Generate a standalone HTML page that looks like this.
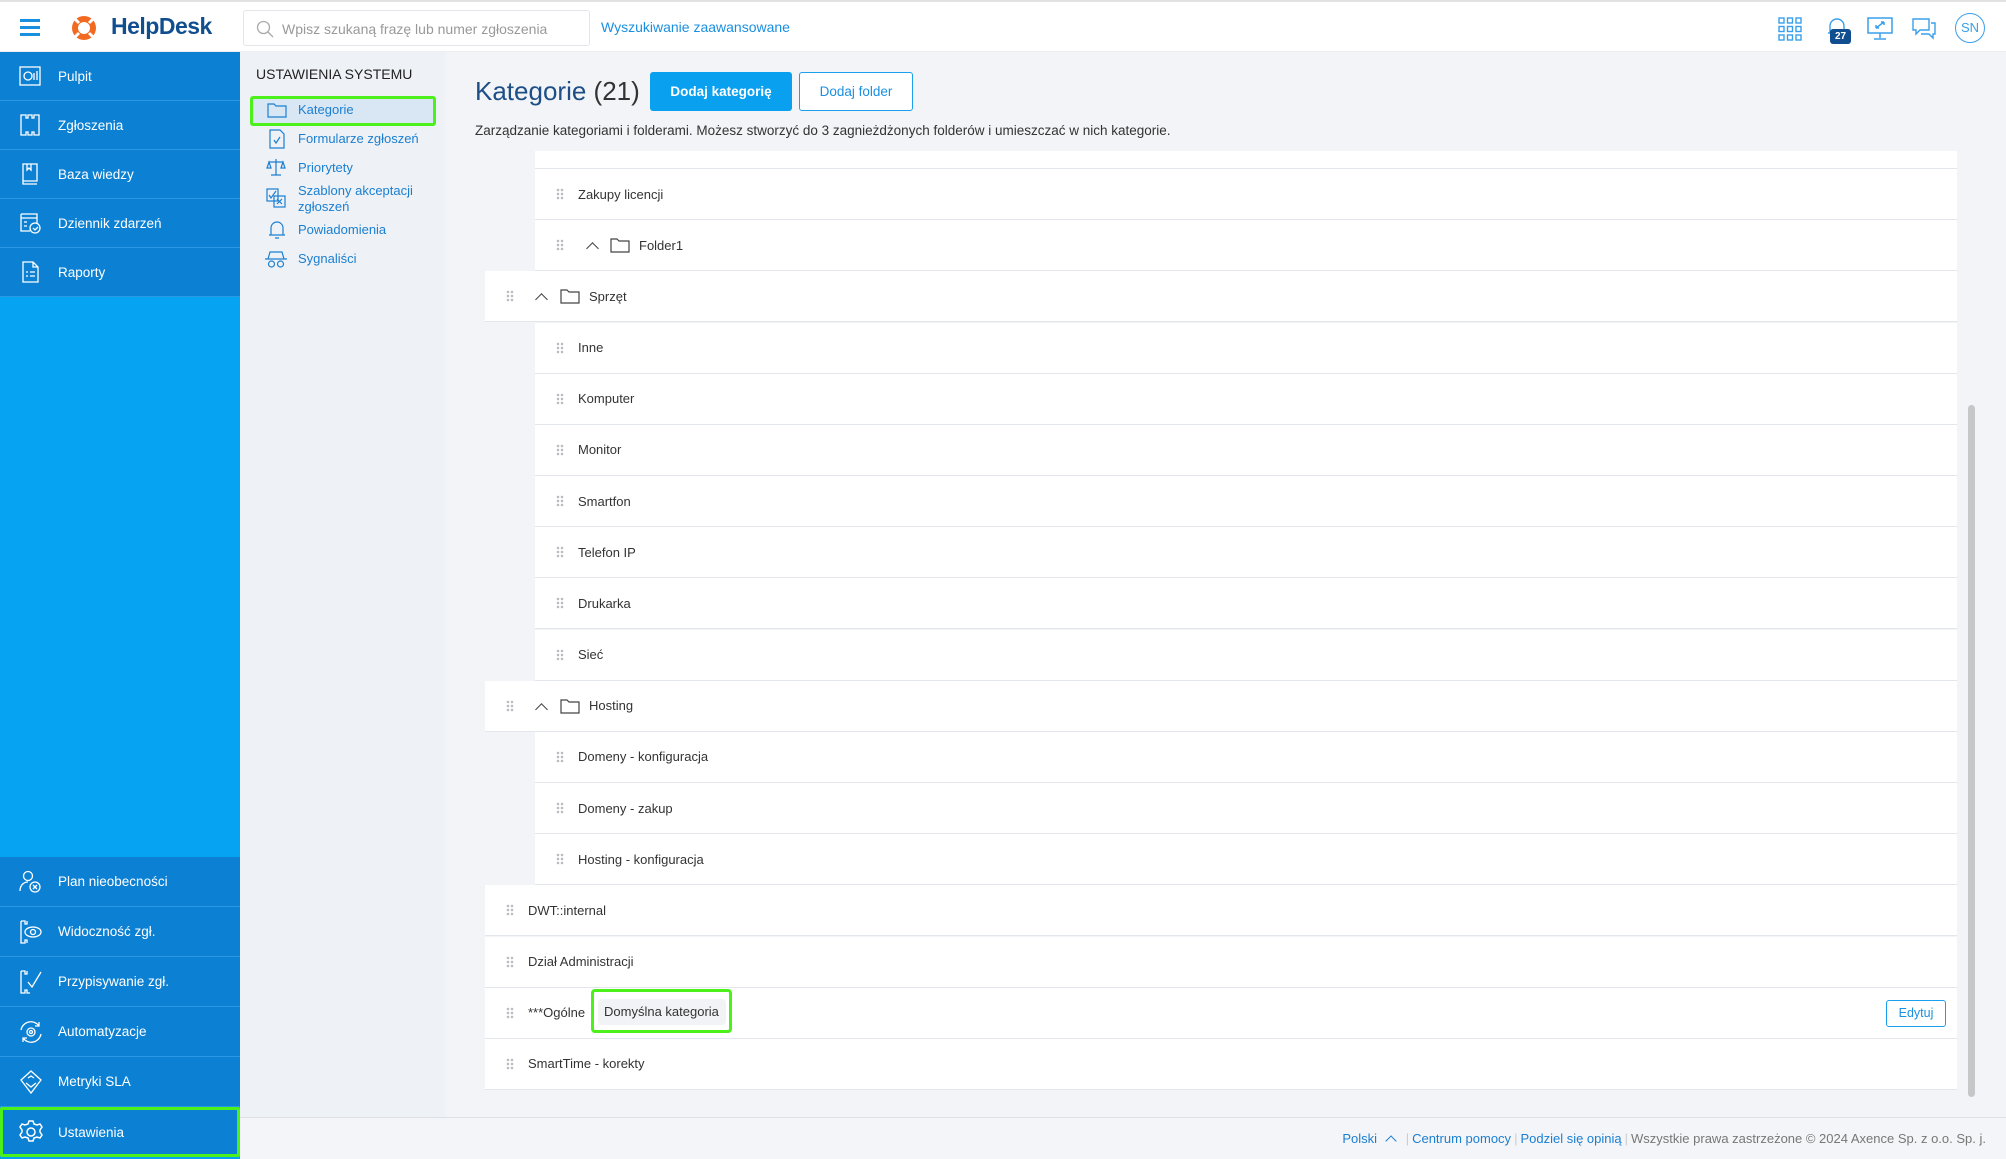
<!DOCTYPE html>
<html><head><meta charset="utf-8"><style>
*{box-sizing:border-box;margin:0;padding:0}
body{width:2006px;height:1159px;overflow:hidden;font-family:"Liberation Sans","DejaVu Sans",sans-serif;background:#f3f4f7;position:relative;color:#333}
.abs{position:absolute}
#hdr{left:0;top:0;width:2006px;height:52px;background:#fff;border-top:2px solid #e2e2e2;border-bottom:1px solid #eceef2}
#side{left:0;top:52px;width:240px;height:1107px;background:#06a3f2}
.si{position:absolute;left:0;width:240px;background:#0c80d3;border-bottom:1px solid #2b98e6;color:#fff;font-size:13.5px;display:flex;align-items:center}
.si span{position:absolute;left:58px}
.si svg{position:absolute;left:18px}
#sub{left:240px;top:52px;width:205px;height:1065px;background:#eef1f5}
.sub{position:absolute;left:298px;font-size:13px;color:#1b7fd1;line-height:16px}
.row{position:absolute;height:51.2px;background:#fff;border-bottom:1.5px solid #e3e7ec;font-size:13px;color:#333;display:flex;align-items:center}
.dh{position:absolute;width:8px;height:12px;background-image:radial-gradient(circle,#b9bcc2 1.2px,transparent 1.4px);background-size:4px 4px}
.txt{position:absolute}
.chev{position:absolute;width:9px;height:9px;border-left:1.6px solid #444;border-top:1.6px solid #444;transform:rotate(45deg)}
.fold{position:absolute}
.ft{font-size:13px;color:#1b7fd1}
.sep{color:#ccc;margin:0 3px}
</style></head><body>
<div id="hdr" class="abs">
 <div class="abs" style="left:20px;top:17px;width:20px">
  <div style="height:2.5px;background:#1a8fe0;margin-bottom:4.5px"></div><div style="height:2.5px;background:#1a8fe0;margin-bottom:4.5px"></div><div style="height:2.5px;background:#1a8fe0"></div></div>
 <svg class="abs" style="left:70px;top:12px" width="28" height="28" viewBox="0 0 28 28"><circle cx="14" cy="14" r="12" fill="#f26a21"/><circle cx="14" cy="14" r="6" fill="#fff"/><g stroke="#fff" stroke-width="3"><line x1="5" y1="5" x2="9" y2="9"/><line x1="23" y1="5" x2="19" y2="9"/><line x1="5" y1="23" x2="9" y2="19"/><line x1="23" y1="23" x2="19" y2="19"/></g></svg>
 <div class="abs" style="left:111px;top:11px;font-size:23px;font-weight:bold;color:#114e8f;letter-spacing:-0.5px">HelpDesk</div>
 <div class="abs" style="left:243px;top:8px;width:347px;height:36px;border:1px solid #e3e5ea;border-radius:3px;background:#fff">
  <svg class="abs" style="left:12px;top:9px" width="18" height="18" viewBox="0 0 18 18"><circle cx="7.5" cy="7.5" r="6" fill="none" stroke="#aaa" stroke-width="1.3"/><line x1="12" y1="12" x2="17" y2="17" stroke="#aaa" stroke-width="1.3"/></svg>
  <div class="abs" style="left:38px;top:10px;font-size:14px;color:#999">Wpisz szukaną frazę lub numer zgłoszenia</div></div>
 <div class="abs" style="left:601px;top:17px;font-size:14px;color:#1a8fe0">Wyszukiwanie zaawansowane</div>
 <svg class="abs" style="left:1778px;top:15px" width="24" height="24" viewBox="0 0 24 24" fill="none" stroke="#3a9fea" stroke-width="1.4"><rect x="1" y="1" width="5" height="5"/><rect x="9.5" y="1" width="5" height="5"/><rect x="18" y="1" width="5" height="5"/><rect x="1" y="9.5" width="5" height="5"/><rect x="9.5" y="9.5" width="5" height="5"/><rect x="18" y="9.5" width="5" height="5"/><rect x="1" y="18" width="5" height="5"/><rect x="9.5" y="18" width="5" height="5"/><rect x="18" y="18" width="5" height="5"/></svg>
 <svg class="abs" style="left:1826px;top:14px" width="22" height="22" viewBox="0 0 22 22" fill="none" stroke="#3a9fea" stroke-width="1.4"><path d="M4 17V10a7 7 0 0 1 14 0v7z M2 17h18 M9 20h4"/></svg>
 <div class="abs" style="left:1830px;top:27px;width:21px;height:15px;background:#114e8f;border-radius:3px;color:#fff;font-size:10px;font-weight:bold;text-align:center;line-height:15px">27</div>
 <svg class="abs" style="left:1867px;top:15px" width="26" height="24" viewBox="0 0 26 24" fill="none" stroke="#3a9fea" stroke-width="1.5"><rect x="1" y="1" width="24" height="15"/><path d="M13 16v5M7 22h12M9 11l8-6M9 11h3M9 11v-3M17 5h-3M17 5v3"/></svg>
 <svg class="abs" style="left:1912px;top:16px" width="24" height="22" viewBox="0 0 24 22" fill="none" stroke="#3a9fea" stroke-width="1.4"><path d="M1 1h16v11H8l-4 4v-4H1z M19 5h4v11h-2v4l-4-4H9"/></svg>
 <div class="abs" style="left:1955px;top:11px;width:30px;height:30px;border:1.4px solid #3a9fea;border-radius:50%;color:#3a9fea;font-size:13px;text-align:center;line-height:28px">SN</div>
</div>

<div id="side" class="abs"></div>
<div class="si" style="top:52px;height:49px"><svg width="24" height="24" viewBox="0 0 24 24" fill="none" stroke="#fff" stroke-width="1.3"><rect x="2" y="3" width="20" height="18"/><circle cx="10" cy="12" r="4"/><path d="M16 9v7M19 7v9"/></svg><span>Pulpit</span></div>
<div class="si" style="top:101px;height:49px"><svg width="24" height="24" viewBox="0 0 24 24" fill="none" stroke="#fff" stroke-width="1.3"><path d="M3 2h5v3h2V2h4v3h2V2h5v20h-5v-3h-2v3h-4v-3H8v3H3z"/></svg><span>Zgłoszenia</span></div>
<div class="si" style="top:150px;height:49px"><svg width="24" height="24" viewBox="0 0 24 24" fill="none" stroke="#fff" stroke-width="1.3"><path d="M5 2h14v17H5zM5 19v3h14M9 2v6l2-2 2 2V2"/></svg><span>Baza wiedzy</span></div>
<div class="si" style="top:199px;height:49px"><svg width="24" height="24" viewBox="0 0 24 24" fill="none" stroke="#fff" stroke-width="1.3"><path d="M3 3h16v9M3 3v17h9M3 7h16M6 11h3M6 15h3"/><circle cx="17" cy="17" r="5"/><path d="M15 17l2 2 3-3"/></svg><span>Dziennik zdarzeń</span></div>
<div class="si" style="top:248px;height:49px"><svg width="24" height="24" viewBox="0 0 24 24" fill="none" stroke="#fff" stroke-width="1.3"><path d="M5 2h10l5 5v15H5zM15 2v5h5M8 12h2M12 12h5M8 16h2M12 16h5"/></svg><span>Raporty</span></div>

<div class="si" style="top:857px;height:50px"><svg width="26" height="26" viewBox="0 0 26 26" fill="none" stroke="#fff" stroke-width="1.3"><circle cx="10" cy="7" r="4.5"/><path d="M2 22c0-6 4-9 8-9"/><circle cx="17" cy="18" r="5"/><path d="M15 16l4 4M19 16l-4 4"/></svg><span>Plan nieobecności</span></div>
<div class="si" style="top:907px;height:50px"><svg width="26" height="26" viewBox="0 0 26 26" fill="none" stroke="#fff" stroke-width="1.3"><path d="M3 2h4v3h2V2M3 2v22h4v-3h2v3"/><ellipse cx="15" cy="13" rx="8" ry="5"/><circle cx="15" cy="13" r="2.5"/></svg><span>Widoczność zgł.</span></div>
<div class="si" style="top:957px;height:50px"><svg width="26" height="26" viewBox="0 0 26 26" fill="none" stroke="#fff" stroke-width="1.3"><path d="M3 2h4v3h2V2M3 2v22h4v-3h2v3h3M10 13l4 5 9-15"/></svg><span>Przypisywanie zgł.</span></div>
<div class="si" style="top:1007px;height:50px"><svg width="26" height="26" viewBox="0 0 26 26" fill="none" stroke="#fff" stroke-width="1.3"><circle cx="13" cy="13" r="4"/><circle cx="13" cy="13" r="1.5"/><path d="M3 11a10 10 0 0 1 18-4M23 15a10 10 0 0 1-18 4M21 3v4h-4M5 23v-4h4"/></svg><span>Automatyzacje</span></div>
<div class="si" style="top:1057px;height:50px"><svg width="26" height="26" viewBox="0 0 26 26" fill="none" stroke="#fff" stroke-width="1.3"><path d="M13 2l10 9-10 13L3 11z M8 14l5 4 5-4M10 9l3-2 3 2"/></svg><span>Metryki SLA</span></div>
<div class="si" style="top:1107px;height:50px;border:3px solid #4cf01a;border-radius:2px"><svg width="26" height="26" viewBox="0 0 26 26" fill="none" stroke="#fff" stroke-width="1.5" style="left:15px"><circle cx="13" cy="13" r="4"/><path d="M11 2h4l1 3 3 1 3-1 2 3-2 3v2l2 3-2 3-3-1-3 1-1 3h-4l-1-3-3-1-3 1-2-3 2-3v-2L2 8l2-3 3 1 3-1z"/></svg><span style="left:55px">Ustawienia</span></div>

<div id="sub" class="abs"></div>
<div class="abs" style="left:256px;top:66px;font-size:14px;color:#222">USTAWIENIA SYSTEMU</div>
<div class="abs" style="left:250px;top:96px;width:186px;height:30px;background:#d9e6f4;border:3px solid #4cf01a;border-radius:3px"></div>
<svg class="abs" style="left:267px;top:102px" width="20" height="16" viewBox="0 0 20 16" fill="none" stroke="#1b7fd1" stroke-width="1.2"><path d="M1 2h6l2 2h10v11H1z"/></svg>
<div class="sub" style="top:102px">Kategorie</div>
<svg class="abs" style="left:269px;top:129px" width="16" height="20" viewBox="0 0 16 20" fill="none" stroke="#1b7fd1" stroke-width="1.2"><path d="M1 1h10l4 4v14H1z M5 11l2 3 4-6"/></svg>
<div class="sub" style="top:131px">Formularze zgłoszeń</div>
<svg class="abs" style="left:266px;top:158px" width="20" height="18" viewBox="0 0 20 18" fill="none" stroke="#1b7fd1" stroke-width="1.2"><path d="M10 1v16M5 17h10M3 4h14M3 4l-2 6h4zM17 4l-2 6h4z"/></svg>
<div class="sub" style="top:160px">Priorytety</div>
<svg class="abs" style="left:266px;top:188px" width="20" height="20" viewBox="0 0 20 20" fill="none" stroke="#1b7fd1" stroke-width="1.2"><rect x="1" y="1" width="11" height="12"/><rect x="8" y="8" width="11" height="11"/><path d="M3 7l2 3 5-7M11 11l5 5M16 11l-5 5"/></svg>
<div class="sub" style="top:183px">Szablony akceptacji<br>zgłoszeń</div>
<svg class="abs" style="left:268px;top:220px" width="18" height="20" viewBox="0 0 18 20" fill="none" stroke="#1b7fd1" stroke-width="1.2"><path d="M3 15V8a6 6 0 0 1 12 0v7zM1 15h16M7 18h4"/></svg>
<div class="sub" style="top:222px">Powiadomienia</div>
<svg class="abs" style="left:264px;top:250px" width="24" height="18" viewBox="0 0 24 18" fill="none" stroke="#1b7fd1" stroke-width="1.2"><path d="M6 2h12l2 7H4zM1 9h22"/><circle cx="7.5" cy="14" r="3"/><circle cx="16.5" cy="14" r="3"/></svg>
<div class="sub" style="top:251px">Sygnaliści</div>

<div class="abs" style="left:475px;top:76px;font-size:26px;color:#1d4f86">Kategorie <span style="color:#333">(21)</span></div>
<div class="abs" style="left:650px;top:72px;width:142px;height:39px;background:#0aa0f0;border-radius:3px;color:#fff;font-size:13.5px;font-weight:bold;text-align:center;line-height:39px">Dodaj kategorię</div>
<div class="abs" style="left:799px;top:72px;width:114px;height:39px;background:#fff;border:1px solid #1aa0ee;border-radius:3px;color:#1a90e0;font-size:13.5px;text-align:center;line-height:37px">Dodaj folder</div>
<div class="abs" style="left:475px;top:123px;font-size:13.5px;color:#333">Zarządzanie kategoriami i folderami. Możesz stworzyć do 3 zagnieżdżonych folderów i umieszczać w nich kategorie.</div>

<div class="row" style="left:535px;top:151px;width:1422px;height:18px"></div>

<div class="row" style="left:535px;top:169px;width:1422px"><i class="dh" style="left:21px"></i><span class="txt" style="left:43px">Zakupy licencji</span></div>
<div class="row" style="left:535px;top:220.2px;width:1422px"><i class="dh" style="left:21px"></i><i class="chev" style="left:53px;top:24px"></i><svg class="fold" style="left:75px;top:17px" width="20" height="16" viewBox="0 0 20 16" fill="none" stroke="#444" stroke-width="1.2"><path d="M1 2h6l2 2h10v11H1z"/></svg><span class="txt" style="left:104px">Folder1</span></div>
<div class="row" style="left:485px;top:271.3px;width:1472px"><i class="dh" style="left:21px"></i><i class="chev" style="left:52px;top:24px"></i><svg class="fold" style="left:75px;top:17px" width="20" height="16" viewBox="0 0 20 16" fill="none" stroke="#444" stroke-width="1.2"><path d="M1 2h6l2 2h10v11H1z"/></svg><span class="txt" style="left:104px">Sprzęt</span></div>
<div class="row" style="left:535px;top:322.5px;width:1422px"><i class="dh" style="left:21px"></i><span class="txt" style="left:43px">Inne</span></div>
<div class="row" style="left:535px;top:373.7px;width:1422px"><i class="dh" style="left:21px"></i><span class="txt" style="left:43px">Komputer</span></div>
<div class="row" style="left:535px;top:424.8px;width:1422px"><i class="dh" style="left:21px"></i><span class="txt" style="left:43px">Monitor</span></div>
<div class="row" style="left:535px;top:476px;width:1422px"><i class="dh" style="left:21px"></i><span class="txt" style="left:43px">Smartfon</span></div>
<div class="row" style="left:535px;top:527.2px;width:1422px"><i class="dh" style="left:21px"></i><span class="txt" style="left:43px">Telefon IP</span></div>
<div class="row" style="left:535px;top:578.3px;width:1422px"><i class="dh" style="left:21px"></i><span class="txt" style="left:43px">Drukarka</span></div>
<div class="row" style="left:535px;top:629.5px;width:1422px"><i class="dh" style="left:21px"></i><span class="txt" style="left:43px">Sieć</span></div>
<div class="row" style="left:485px;top:680.7px;width:1472px"><i class="dh" style="left:21px"></i><i class="chev" style="left:52px;top:24px"></i><svg class="fold" style="left:75px;top:17px" width="20" height="16" viewBox="0 0 20 16" fill="none" stroke="#444" stroke-width="1.2"><path d="M1 2h6l2 2h10v11H1z"/></svg><span class="txt" style="left:104px">Hosting</span></div>
<div class="row" style="left:535px;top:731.8px;width:1422px"><i class="dh" style="left:21px"></i><span class="txt" style="left:43px">Domeny - konfiguracja</span></div>
<div class="row" style="left:535px;top:783px;width:1422px"><i class="dh" style="left:21px"></i><span class="txt" style="left:43px">Domeny - zakup</span></div>
<div class="row" style="left:535px;top:834.2px;width:1422px"><i class="dh" style="left:21px"></i><span class="txt" style="left:43px">Hosting - konfiguracja</span></div>
<div class="row" style="left:485px;top:885.3px;width:1472px"><i class="dh" style="left:21px"></i><span class="txt" style="left:43px">DWT::internal</span></div>
<div class="row" style="left:485px;top:936.5px;width:1472px"><i class="dh" style="left:21px"></i><span class="txt" style="left:43px">Dział Administracji</span></div>
<div class="row" style="left:485px;top:987.7px;width:1472px"><i class="dh" style="left:21px"></i><span class="txt" style="left:43px">***Ogólne</span>
 <div class="abs" style="left:106px;top:1px;width:141px;height:44px;border:3px solid #4cf01a;border-radius:4px"></div>
 <div class="abs" style="left:113px;top:11px;width:128px;height:26px;background:#f2f3f7;border-radius:4px;font-size:13px;line-height:26px;padding-left:6px">Domyślna kategoria</div>
 <div class="abs" style="left:1401px;top:12px;width:60px;height:27px;border:1px solid #1aa0ee;border-radius:3px;color:#1a90e0;font-size:12.5px;text-align:center;line-height:25px">Edytuj</div></div>
<div class="row" style="left:485px;top:1038.8px;width:1472px"><i class="dh" style="left:21px"></i><span class="txt" style="left:43px">SmartTime - korekty</span></div>

<div class="abs" style="left:1968px;top:405px;width:7px;height:692px;background:#c6c7c9;border-radius:4px"></div>
<div class="abs" style="left:240px;top:1117px;width:1766px;height:42px;background:#f4f5f8;border-top:1px solid #dde0e5"></div>
<div class="abs" style="right:20px;top:1131px;font-size:13px;white-space:nowrap"><span class="ft">Polski</span> <span class="ft" style="display:inline-block;width:8px;height:8px;border-left:1.3px solid #1b7fd1;border-top:1.3px solid #1b7fd1;transform:rotate(45deg);margin:0 8px 0 6px;position:relative;top:2px"></span><span class="sep">|</span><span class="ft">Centrum pomocy</span><span class="sep">|</span><span class="ft">Podziel się opinią</span><span class="sep">|</span><span style="color:#777">Wszystkie prawa zastrzeżone © 2024 Axence Sp. z o.o. Sp. j.</span></div>
</body></html>
